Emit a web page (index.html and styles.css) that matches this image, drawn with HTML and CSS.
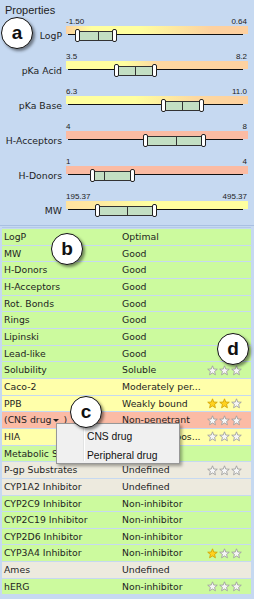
FILE: index.html
```html
<!DOCTYPE html>
<html lang="en">
<head>
  <meta charset="UTF-8">
  <meta name="viewport" content="width=device-width, initial-scale=1.0">
  <title>Properties</title>
  <link rel="stylesheet" href="styles.css">
</head>
<body>
  <div id="props">
    <div class="props-title">Properties</div>
    <div id="prop-list"></div>
  </div>
  <div id="table"></div>

  <div id="menu">
    <div class="menu-item">CNS drug</div>
    <div class="menu-item">Peripheral drug</div>
  </div>

  <div class="callout" id="call-a">a</div>
  <div class="callout" id="call-b">b</div>
  <div class="callout" id="call-c">c</div>
  <div class="callout" id="call-d">d</div>

  <script>
    const propList = document.getElementById('prop-list');
    const table = document.getElementById('table');

    // from / to / mark are pixel offsets inside the 182px track
    const props = [
      { name: 'LogP', min: '-1.50', max: '0.64', bar: 'bar-logp', from: 11, to: 49, mark: 32 },
      { name: 'pKa Acid', min: '3.5', max: '8.2', bar: 'bar-acid', from: 50, to: 89, mark: 69 },
      { name: 'pKa Base', min: '6.3', max: '11.0', bar: 'bar-base', from: 97, to: 136, mark: 116 },
      { name: 'H-Acceptors', min: '4', max: '8', bar: 'bar-bad', from: 79, to: 138, mark: 110 },
      { name: 'H-Donors', min: '1', max: '4', bar: 'bar-bad', from: 26, to: 67, mark: 38 },
      { name: 'MW', min: '195.37', max: '495.37', bar: 'bar-mw', from: 31, to: 89, mark: 61 }
    ];

    const rows = [
      ['LogP', 'Optimal', 'green'],
      ['MW', 'Good', 'green'],
      ['H-Donors', 'Good', 'green'],
      ['H-Acceptors', 'Good', 'green'],
      ['Rot. Bonds', 'Good', 'green'],
      ['Rings', 'Good', 'green'],
      ['Lipinski', 'Good', 'green'],
      ['Lead-like', 'Good', 'green'],
      ['Solubility', 'Soluble', 'green', 0],
      ['Caco-2', 'Moderately per...', 'yellow'],
      ['PPB', 'Weakly bound', 'yellow', 2],
      ['(CNS drug<span class="caret"></span>)', 'Non-penetrant', 'red', 0],
      ['HIA', 'Absorption pos...', 'yellow', 0],
      ['Metabolic Stability', '', 'green'],
      ['P-gp Substrates', 'Undefined', 'grey', 0],
      ['CYP1A2 Inhibitor', 'Undefined', 'grey'],
      ['CYP2C9 Inhibitor', 'Non-inhibitor', 'green'],
      ['CYP2C19 Inhibitor', 'Non-inhibitor', 'green'],
      ['CYP2D6 Inhibitor', 'Non-inhibitor', 'green'],
      ['CYP3A4 Inhibitor', 'Non-inhibitor', 'green', 1],
      ['Ames', 'Undefined', 'grey'],
      ['hERG', 'Non-inhibitor', 'green', 0]
    ];

    const starPoints = '6,0.9 7.4,4.4 11.2,4.6 8.3,7 9.2,10.7 6,8.7 2.8,10.7 3.7,7 0.8,4.6 4.6,4.4';

    function star(on) {
      return '<svg class="star ' + (on ? 'on' : 'off') + '" width="11" height="11" viewBox="0 0 12 12">' +
        '<polygon points="' + starPoints + '"/></svg>';
    }

    props.forEach(p => {
      const row = document.createElement('div');
      row.className = 'prop';
      row.innerHTML =
        '<div class="prop-label">' + p.name + '</div>' +
        '<div class="prop-track">' +
          '<div class="prop-limits"><span>' + p.min + '</span><span>' + p.max + '</span></div>' +
          '<div class="prop-bar ' + p.bar + '">' +
            '<div class="prop-sel" style="left:' + p.from + 'px;width:' + (p.to - p.from) + 'px">' +
              '<i class="tick" style="left:' + (p.mark - p.from - 1) + 'px"></i>' +
            '</div>' +
          '</div>' +
        '</div>';
      propList.appendChild(row);
    });

    rows.forEach(r => {
      const row = document.createElement('div');
      row.className = 'row ' + r[2];
      let stars = '';
      if (r[3] !== undefined) {
        for (let i = 0; i < 3; i++) stars += star(i < r[3]);
      }
      row.innerHTML =
        '<div class="c-name">' + r[0] + '</div>' +
        '<div class="c-val">' + r[1] + '</div>' +
        '<div class="c-stars">' + stars + '</div>';
      table.appendChild(row);
    });
  </script>
</body>
</html>
```

FILE: styles.css
```css
body {
  margin: 0;
  width: 254px;
  height: 599px;
  position: relative;
  overflow: hidden;
  background-color: #c6d9f1;
  color: #1e1e1e;
  font-family: "DejaVu Sans", Verdana, sans-serif;
}
#props {
  height: 225px;
  border-bottom: 1px solid #a9c0e2;
}
.props-title {
  height: 13px;
  padding: 4px 0 0 5px;
  font: 11px/12px "Liberation Sans", Arial, sans-serif;
  color: #222;
}
.prop {
  display: flex;
  height: 35px;
}
.prop-label {
  width: 62px;
  padding: 13px 4px 0 0;
  text-align: right;
  font-size: 9.3px;
  line-height: 11px;
  white-space: nowrap;
}
.prop-track {
  width: 182px;
}
.prop-limits {
  display: flex;
  justify-content: space-between;
  height: 9px;
  padding-right: 1px;
  font: 8px/9px "Liberation Sans", Arial, sans-serif;
  color: #222;
}
.prop-bar {
  position: relative;
  height: 8px;
}
.prop-bar::after {
  content: '';
  position: absolute;
  left: 2px;
  right: 5px;
  top: 8px;
  height: 1px;
  background-color: #111;
}
.bar-logp {
  background: linear-gradient(to right, #fdd3a0 0%, #ffff9f 14%, #ffff9f 40%, #fdd1a0 80%, #fdd0a0 100%);
}
.bar-acid {
  background: linear-gradient(to right, #ffff9f 0%, #ffff9f 32%, #fdd8a0 50%, #fdd1a0 100%);
}
.bar-base {
  background: linear-gradient(to right, #ffff9f 0%, #ffff9f 38%, #fdd8a0 72%, #fdd1a0 100%);
}
.bar-bad {
  background-color: #fbbba3;
}
.bar-mw {
  background: linear-gradient(to right, #ffe3a0 0%, #ffe8a0 15%, #ffff9f 45%, #ffff9f 100%);
}
.prop-sel {
  position: absolute;
  top: 5px;
  height: 10px;
  box-sizing: border-box;
  border: 1px solid #333;
  background-color: #c3dfc3;
  z-index: 1;
}
.prop-sel::before,
.prop-sel::after {
  content: '';
  position: absolute;
  top: -3px;
  width: 3px;
  height: 11px;
  background-color: #fff;
  border: 1px solid #222;
  border-radius: 2px;
}
.prop-sel::before {
  left: -3px;
}
.prop-sel::after {
  right: -3px;
}
.tick {
  position: absolute;
  top: 0;
  bottom: 0;
  width: 1px;
  background-color: #333;
}

#table {
  margin: 1px 3px 0 2px;
  padding-top: 1px;
  border-top: 1px solid #b4c9e8;
}
.row {
  display: flex;
  height: 15.67px;
  border-bottom: 1px solid #c6d9f1;
  font-size: 9.3px;
  line-height: 15.67px;
  white-space: nowrap;
}
.green { background-color: #ccfa9e; }
.yellow { background-color: #ffffaa; }
.red { background-color: #fbbba5; }
.grey { background-color: #edeade; }
.c-name {
  width: 118px;
  padding-left: 2px;
}
.c-val {
  width: 85px;
  overflow: hidden;
}
.c-stars {
  display: flex;
  align-items: center;
  gap: 1px;
}
.star polygon {
  stroke-width: 0.9;
  stroke-linejoin: round;
}
.star.off polygon {
  fill: #f6f6f6;
  stroke: #9a9a9a;
}
.star.on polygon {
  fill: #ffd21f;
  stroke: #d2a200;
}
.caret {
  display: inline-block;
  margin: 0 4px 0 2px;
  border-left: 3px solid transparent;
  border-right: 3px solid transparent;
  border-top: 3px solid #222;
  vertical-align: middle;
}

#menu {
  position: absolute;
  left: 56px;
  top: 423px;
  width: 124px;
  height: 41px;
  box-sizing: border-box;
  padding-top: 3px;
  background-color: #f0f0f0;
  border: 1px solid #979797;
  box-shadow: 2px 2px 3px rgba(0, 0, 0, 0.35);
  z-index: 5;
}
#menu::before {
  content: '';
  position: absolute;
  left: 26px;
  top: 2px;
  bottom: 2px;
  width: 1px;
  background-color: #e2e3e3;
  border-right: 1px solid #fff;
}
.menu-item {
  height: 19px;
  padding-left: 30px;
  font: 10.3px/19px "Liberation Sans", Arial, sans-serif;
  color: #111;
}

.callout {
  position: absolute;
  width: 30px;
  height: 30px;
  border: 1.5px solid #111;
  border-radius: 50%;
  background-color: #fff;
  box-shadow: 2px 2px 3px rgba(0, 0, 0, 0.45);
  font: bold 19px/29px "Liberation Sans", Arial, sans-serif;
  text-align: center;
  color: #111;
  z-index: 10;
}
#call-a { left: 1px; top: 17px; }
#call-b { left: 51px; top: 233px; }
#call-c { left: 70px; top: 396px; }
#call-d { left: 217px; top: 333px; }
```
